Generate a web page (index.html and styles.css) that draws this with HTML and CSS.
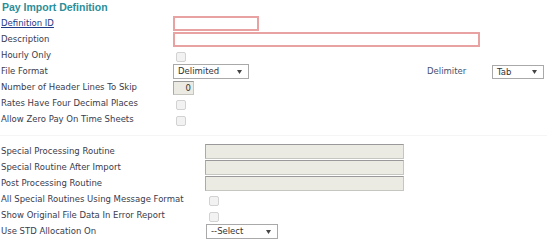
FILE: index.html
```html
<!DOCTYPE html>
<html lang="en">
<head>
  <meta charset="UTF-8">
  <meta name="viewport" content="width=device-width, initial-scale=1.0">
  <title>Pay Import Definition</title>
  <link rel="stylesheet" href="styles.css">
</head>
<body>
  <h1 class="title">Pay Import Definition</h1>
  <div class="form top">
    <a class="lbl link" href="#">Definition ID</a>
    <div class="field"><input class="txt req id" type="text"></div>

    <label class="lbl">Description</label>
    <div class="field"><input class="txt req desc" type="text"></div>

    <label class="lbl">Hourly Only</label>
    <div class="field"><input class="chk" type="checkbox"></div>

    <label class="lbl">File Format</label>
    <div class="field">
      <div class="select fmt"><span>Delimited</span><svg width="5" height="4" viewBox="0 0 5 4"><polygon points="0,0 5,0 2.5,4" fill="#444"/></svg></div>
      <span class="lbl delim">Delimiter</span>
      <div class="select tab"><span>Tab</span><svg width="5" height="4" viewBox="0 0 5 4"><polygon points="0,0 5,0 2.5,4" fill="#444"/></svg></div>
    </div>

    <label class="lbl">Number of Header Lines To Skip</label>
    <div class="field"><input class="txt ro num" type="text" value="0" readonly></div>

    <label class="lbl">Rates Have Four Decimal Places</label>
    <div class="field"><input class="chk" type="checkbox"></div>

    <label class="lbl">Allow Zero Pay On Time Sheets</label>
    <div class="field"><input class="chk" type="checkbox"></div>
  </div>

  <div class="sep"></div>

  <div class="form bottom">
    <label class="lbl">Special Processing Routine</label>
    <div class="field"><input class="txt ro wide" type="text" readonly></div>

    <label class="lbl">Special Routine After Import</label>
    <div class="field"><input class="txt ro wide" type="text" readonly></div>

    <label class="lbl">Post Processing Routine</label>
    <div class="field"><input class="txt ro wide" type="text" readonly></div>

    <label class="lbl">All Special Routines Using Message Format</label>
    <div class="field"><input class="chk" type="checkbox"></div>

    <label class="lbl">Show Original File Data In Error Report</label>
    <div class="field"><input class="chk" type="checkbox"></div>

    <label class="lbl">Use STD Allocation On</label>
    <div class="field"><div class="select std"><span>--Select</span><svg width="5" height="4" viewBox="0 0 5 4"><polygon points="0,0 5,0 2.5,4" fill="#444"/></svg></div></div>
  </div>
</body>
</html>
```

FILE: styles.css
```css
body {
  margin: 0;
  background: #fff;
  font-family: "DejaVu Sans", Verdana, sans-serif;
  font-size: 8.5px;
  color: #3a3b4c;
}
.title {
  margin: 0;
  height: 16px;
  padding-left: 2px;
  font-family: "Liberation Sans", Arial, sans-serif;
  font-size: 10.5px;
  line-height: 14px;
  font-weight: bold;
  color: #2b8e98;
}
.form {
  display: grid;
  grid-auto-rows: 16px;
}
.top {
  grid-template-columns: 173px 1fr;
}
.bottom {
  grid-template-columns: 205px 1fr;
}
.lbl {
  padding-left: 1px;
  line-height: 15px;
  white-space: nowrap;
}
.link {
  color: #1d3b86;
  text-decoration: underline;
}
.field {
  display: flex;
  align-items: flex-start;
}
.txt {
  box-sizing: border-box;
  height: 15px;
  margin: 0;
  padding: 0 2px;
  font: inherit;
  outline: none;
}
.req {
  border: 2px solid #e9a2a2;
  background: #fff;
}
.id {
  width: 86px;
}
.desc {
  width: 307px;
}
.ro {
  background: #ebebe4;
  border: 1px solid #c6c6c0;
  border-top-color: #999;
  border-left-color: #aaa;
  color: #333;
}
.num {
  width: 21px;
  height: 14px;
  margin-top: 1px;
  text-align: right;
  padding: 0 2px 0 0;
}
.wide {
  width: 199px;
}
.chk {
  appearance: none;
  box-sizing: border-box;
  width: 10px;
  height: 10px;
  margin: 4px 0 0 3px;
  border: 1px solid #d2d2d2;
  border-radius: 2px;
  background: #f2f2f2;
}
.bottom .chk {
  margin-left: 4px;
}
.select {
  box-sizing: border-box;
  display: flex;
  justify-content: space-between;
  align-items: center;
  height: 15px;
  padding: 0 6px 0 4px;
  border: 1px solid #a9a9a9;
  background: #fff;
  color: #333;
  line-height: 13px;
}
.fmt {
  width: 76px;
}
.delim {
  width: 65px;
  margin-left: 178px;
  padding-left: 0;
  color: #44506e;
}
.tab {
  width: 52px;
  margin-top: 1px;
  height: 14px;
}
.std {
  width: 72px;
  margin-left: 1px;
}
.sep {
  height: 1px;
  margin: 7px 0 8px;
  background: #f5f5f5;
}
```
